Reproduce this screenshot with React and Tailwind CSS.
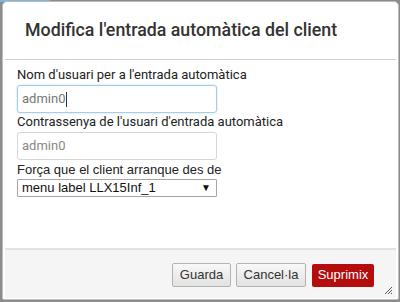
import React from "react";

const roboto = { fontFamily: "Roboto, 'Liberation Sans', sans-serif" };

export default function App() {
  return (
    <div className="w-[400px] h-[302px] bg-[#8c8c8c] relative overflow-hidden">
      {/* strip of the window behind */}
      <div className="absolute top-0 left-0 w-[50px] h-[2px] bg-[#7fb2d6]" />
      <div className="absolute left-[2px] top-[1px] w-[397px] h-[299px] bg-white rounded-t-[5px] rounded-b-[2px] border border-[#bdbdbd] flex flex-col">
        {/* Header */}
        <div className="h-[58px] border-b border-[#d0d0d0] mx-[2px] flex items-center pl-[20px]">
          <h1
            className="text-[17.8px] text-[#333] font-medium"
            style={roboto}
          >
            Modifica l'entrada automàtica del client
          </h1>
        </div>

        {/* Body */}
        <div className="flex-1 px-[14px] pt-[5px] flex flex-col">
          <label className="text-[13px] text-[#222] leading-[20px]" style={roboto}>
            Nom d'usuari per a l'entrada automàtica
          </label>
          <div
            className="w-[200px] h-[28px] rounded-[3px] border border-[#a8cbea] shadow-[0_0_2px_rgba(102,175,233,0.5)] flex items-center pl-[4px] text-[13px] text-[#777]"
            style={roboto}
          >
            admin0<span className="w-px h-[15px] bg-[#333] ml-[1px]" />
          </div>
          <label className="text-[13px] text-[#222] leading-[20px] mt-[-1px]" style={roboto}>
            Contrassenya de l'usuari d'entrada automàtica
          </label>
          <div
            className="w-[200px] h-[28px] rounded-[3px] border border-[#d6d6d6] flex items-center pl-[4px] text-[13px] text-[#888]"
            style={roboto}
          >
            admin0
          </div>
          <label className="text-[13px] text-[#222] leading-[18px] mt-[1px] font-['Liberation_Sans',Arial,sans-serif]">
            Força que el client arranque des de
          </label>
          <div className="w-[200px] h-[18px] border border-[#a6a6a6] rounded-[1px] flex items-center justify-between pl-[4px] pr-[5px] text-[13px] text-[#111] font-['Liberation_Sans',Arial,sans-serif]">
            <span>menu label LLX15Inf_1</span>
            <span className="text-[10px] text-[#111] leading-none">▼</span>
          </div>
        </div>

        {/* Footer */}
        <div className="h-[50px] border-t-2 border-[#e2e2e2] bg-[#f5f5f5] mx-[2px] mb-[1px] flex items-center justify-end pr-[22px] pt-[2px] relative font-['Liberation_Sans',Arial,sans-serif] text-[13px]">
          <button className="h-[24px] w-[59px] border border-[#b3b3b3] rounded-[2px] bg-gradient-to-b from-[#f8f8f8] to-[#e2e2e2] text-[#333]">
            Guarda
          </button>
          <button className="h-[24px] w-[70px] ml-[5px] border border-[#b3b3b3] rounded-[2px] bg-gradient-to-b from-[#f8f8f8] to-[#e2e2e2] text-[#333]">
            Cancel·la
          </button>
          <button className="h-[23px] w-[62px] ml-[6px] rounded-[2px] bg-[#b30d0d] text-white">
            Suprimix
          </button>
          <svg className="absolute right-[3px] bottom-[3px]" width="9" height="9" viewBox="0 0 9 9">
            <path d="M8 1L1 8M8 4L4 8M8 7L7 8" stroke="#555" strokeWidth="1" />
          </svg>
        </div>
      </div>
    </div>
  );
}
